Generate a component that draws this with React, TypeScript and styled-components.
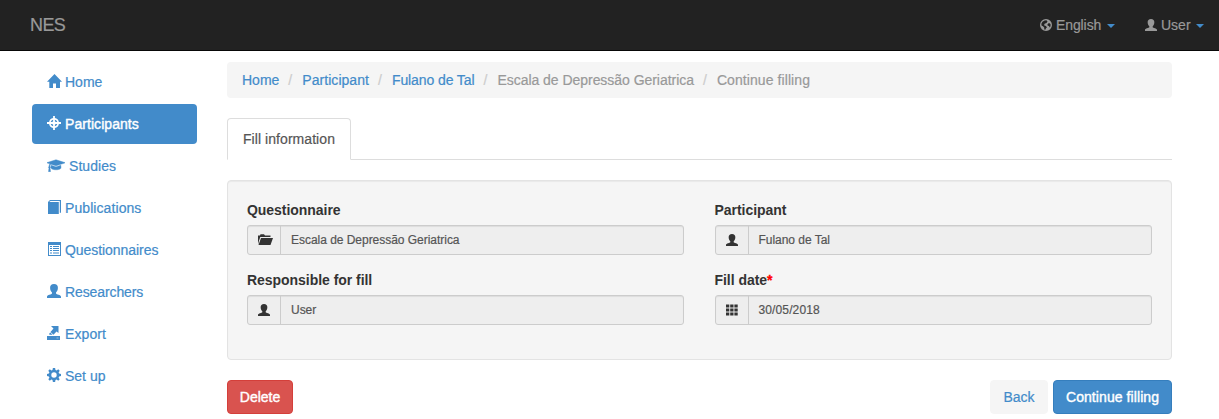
import React from "react";
import styled, { createGlobalStyle, css } from "styled-components";

const GlobalStyle = createGlobalStyle`
  * { box-sizing: border-box; }
  body {
    margin: 0;
    background: #fff;
    color: #333;
    font: 14px/20px "Liberation Sans", Arial, sans-serif;
    -webkit-text-stroke: 0.2px currentColor;
  }
`;

const Navbar = styled.header`
  display: flex;
  align-items: center;
  gap: 30px;
  height: 51px;
  padding: 0 15px 0 30px;
  background: #222;
  border-bottom: 1px solid #080808;
  color: #999;
`;

const Brand = styled.div`
  flex: 1;
  font-size: 18px;
  letter-spacing: -0.6px;
`;

const Text = styled.span<{ $spacing?: number }>`
  letter-spacing: ${(p) => p.$spacing ?? 0}px;
  white-space: nowrap;
`;

const NavMenu = styled.a<{ $width: number }>`
  display: flex;
  align-items: center;
  width: ${(p) => p.$width}px;
`;

const Caret = styled.i`
  margin: 2px 0 0 auto;
  border: 4px solid transparent;
  border-top-color: #428bca;
  border-bottom: 0;
`;

const Glyph = styled.svg<{ $w?: number; $h?: number; $gap?: number }>`
  flex: none;
  width: ${(p) => p.$w ?? 14}px;
  height: ${(p) => p.$h ?? 14}px;
  margin-right: ${(p) => p.$gap ?? 4}px;
  fill: currentColor;
`;

const Page = styled.div`
  display: grid;
  grid-template-columns: 165px 945px;
  gap: 30px;
  padding: 11px 0 0 32px;
`;

const Sidebar = styled.nav`
  display: flex;
  flex-direction: column;
  gap: 2px;
`;

const SideLink = styled.a<{ $active?: boolean }>`
  display: flex;
  align-items: center;
  height: 40px;
  padding: 0 15px;
  border-radius: 4px;
  color: #428bca;
  -webkit-text-stroke: 0.2px currentColor;
  ${(p) => p.$active && css`
    background: #428bca;
    color: #fff;
    -webkit-text-stroke: 0.4px #fff;
  `}
  svg { margin-bottom: 2px; }
`;

const Main = styled.main`
  display: flex;
  flex-direction: column;
`;

const Breadcrumb = styled.ol`
  display: flex;
  height: 36px;
  margin: 0 0 20px;
  padding: 8px 15px;
  list-style: none;
  background: #f5f5f5;
  border-radius: 4px;
  li + li::before {
    content: "/";
    display: inline-block;
    width: 14px;
    padding-left: 9px;
    color: #ccc;
    letter-spacing: 0;
  }
`;

const Crumb = styled.li<{ $link?: boolean; $spacing: number }>`
  color: ${(p) => (p.$link ? "#428bca" : "#999")};
  letter-spacing: ${(p) => p.$spacing}px;
  white-space: nowrap;
`;

const Tabs = styled.div`
  display: flex;
  height: 42px;
  margin-bottom: 20px;
  border-bottom: 1px solid #ddd;
`;

const Tab = styled.div`
  width: 124px;
  height: 42px;
  padding: 10px 15px;
  background: #fff;
  border: 1px solid #ddd;
  border-bottom-color: #fff;
  border-radius: 4px 4px 0 0;
  color: #555;
`;

const Well = styled.section`
  display: grid;
  grid-template-columns: 437px 437.5px;
  grid-auto-rows: 55px;
  gap: 15px 30.5px;
  height: 180px;
  margin-bottom: 20px;
  padding: 19px;
  background: #f5f5f5;
  border: 1px solid #e3e3e3;
  border-radius: 4px;
  box-shadow: inset 0 1px 1px rgba(0, 0, 0, 0.05);
`;

const Label = styled.label`
  display: block;
  margin-bottom: 5px;
  font-weight: bold;
  letter-spacing: -0.04px;
  -webkit-text-stroke: 0;
`;

const Required = styled.span`
  color: #f00;
  -webkit-text-stroke: 0.3px #f00;
`;

const InputGroup = styled.div`
  display: flex;
  height: 30px;
  background: #eee;
  border: 1px solid #ccc;
  border-radius: 3px;
  font-size: 12px;
  box-shadow: inset 0 1px 1px rgba(0, 0, 0, 0.075);
`;

const Addon = styled.div`
  display: flex;
  align-items: center;
  width: 33px;
  padding: 0 0 1px 10px;
  border-right: 1px solid #ccc;
`;

const Value = styled.div<{ $spacing?: number }>`
  padding: 4px 10px;
  color: #555;
  letter-spacing: ${(p) => p.$spacing ?? -0.03}px;
`;

const Actions = styled.div`
  display: flex;
  gap: 5px;
`;

type Tone = "danger" | "plain" | "primary";
const tones = {
  danger: css`background: #d9534f; border-color: #d43f3a; color: #fff; margin-right: auto; -webkit-text-stroke: 0.4px #fff;`,
  plain: css`background: #f5f5f5; border-color: #f5f5f5; color: #428bca; -webkit-text-stroke: 0.2px #428bca;`,
  primary: css`background: #428bca; border-color: #357ebd; color: #fff; -webkit-text-stroke: 0.4px #fff;`,
};

const Button = styled.button<{ $tone: Tone; $width: number }>`
  width: ${(p) => p.$width}px;
  height: 34px;
  padding: 0;
  border: 1px solid;
  border-radius: 4px;
  font: inherit;
  ${(p) => tones[p.$tone]}
`;

type IconProps = { $w?: number; $h?: number; $gap?: number };

const UserIcon = (p: IconProps) => (
  <Glyph viewBox="0 0 14 14" {...p}>
    <path d="M7 0C9.600 0 11 1.500 10.900 3.800C10.900 5.900 10.200 7.300 9 8.400V9.600C9.300 10.600 14 10.800 14 12.700V14H0V12.700C0 10.800 4.700 10.600 5 9.600V8.400C3.800 7.300 3.100 5.900 3.100 3.800C3 1.500 4.400 0 7 0Z" />
  </Glyph>
);
const HomeIcon = () => (
  <Glyph viewBox="0 0 15 14" $w={15} $gap={3}>
    <path d="M7.500 0L15 7.800H13V14H9V9.500H6V14H2.300V7.800H0Z" />
  </Glyph>
);
const TargetIcon = () => (
  <Glyph viewBox="0 0 14 14">
    <path d="M6.100 0H7.900V2.100A5 5 0 0 1 11.900 6.100H14V7.900H11.900A5 5 0 0 1 7.900 11.900V14H6.100V11.900A5 5 0 0 1 2.100 7.900H0V6.100H2.100A5 5 0 0 1 6.100 2.100ZM6.100 3.700A3.500 3.500 0 0 0 3.700 6.100H5.200L6.100 5.200ZM7.900 3.700V5.200L8.800 6.100H10.300A3.500 3.500 0 0 0 7.900 3.700ZM3.700 7.900A3.500 3.500 0 0 0 6.100 10.300V8.800L5.200 7.900ZM8.800 7.900L7.900 8.800V10.300A3.500 3.500 0 0 0 10.300 7.900Z" fillRule="evenodd" />
  </Glyph>
);
const CapIcon = () => (
  <Glyph viewBox="0 -100 2304 1792" $w={18}>
    <path stroke="currentColor" strokeWidth="50" d="M1774 836l18 316q4 69-82 128t-235 93.500-323 34.500-323-34.500-235-93.500-82-128l18-316 574 181q22 7 48 7t48-7zM2304 512q0 23-22 31l-1120 352q-4 1-10 1t-10-1l-652-206q-43 34-71 111.500t-34 178.500q63 36 63 109 0 69-58 107l58 433q2 14-8 25-9 11-24 11h-192q-15 0-24-11-10-11-8-25l58-433q-58-38-58-107 0-73 65-111 11-207 98-330l-333-104q-22-8-22-31t22-31l1120-352q4-1 10-1t10 1l1120 352q22 8 22 31z" />
  </Glyph>
);
const BookIcon = () => (
  <Glyph viewBox="0 0 14 14">
    <path d="M3 0H14V12.800H12.800V1H3.500L2.200 2H11.800V14H1V2Z" />
  </Glyph>
);
const ListIcon = () => (
  <Glyph viewBox="0 0 14 14">
    <path d="M1 0H14V14H1ZM2 3V13H13V3ZM3 4H5V5H3ZM6 4H12V5H6ZM3 6H5V7H3ZM6 6H12V7H6ZM3 8H5V9H3ZM6 8H12V9H6ZM3 10.500H5V11.500H3ZM6 10.500H12V11.500H6Z" fillRule="evenodd" />
  </Glyph>
);
const ExportIcon = () => (
  <Glyph viewBox="0 0 14 14">
    <path d="M4 0H11.500V7L9.500 5.500L6.500 8.700L3.500 6L6.500 2.500ZM2.300 7.500L3.200 6.500L5.600 8.800H2.300ZM0 10H13V14H0Z" />
    <path d="M9.500 12H11.500" stroke="#fff" strokeOpacity=".55" strokeWidth=".8" />
  </Glyph>
);
const GearIcon = () => (
  <Glyph viewBox="0 0 14 14">
    <path d="M5.900 0H8.100L8.500 1.900L9.700 2.400L11.200 1.300L12.700 2.800L11.600 4.400L12.100 5.500L14 5.900V8.100L12.100 8.500L11.600 9.700L12.700 11.200L11.200 12.700L9.700 11.600L8.500 12.100L8.100 14H5.900L5.500 12.100L4.400 11.600L2.800 12.700L1.300 11.200L2.400 9.700L1.900 8.500L0 8.100V5.900L1.900 5.500L2.400 4.400L1.300 2.800L2.800 1.300L4.400 2.400L5.500 1.900ZM7 4.300A2.700 2.700 0 1 0 7 9.700A2.700 2.700 0 1 0 7 4.300Z" fillRule="evenodd" />
  </Glyph>
);
const GlobeIcon = () => (
  <Glyph viewBox="0 0 12 12" $w={12} $h={12}>
    <path d="M6 0A6 6 0 1 1 6 12A6 6 0 1 1 6 0ZM6.400 1.300L4.600 1.500L2.500 2.700L1.400 4.700L1.500 6.500L3 7.300L4.200 8.400L4.300 10.400L5.300 10.700L6 9.300L7 8.200L5.800 6.900L4 6.300L4.600 4.700L6.500 4L7.500 2.600ZM8.500 4.300L7.400 5.500L7.800 6.700L9.200 7L9.300 8.600L10.400 7.400L10.600 5.500L9.700 4.300Z" fillRule="evenodd" />
  </Glyph>
);
const FolderIcon = () => (
  <Glyph viewBox="0 0 15 11" $w={15} $h={11} $gap={0}>
    <path d="M0 10.500V1.500H2L2.500 .3H6L7 1.500H12.500V3H2.300L.6 8ZM3 4H15L12.500 11H.5Z" />
  </Glyph>
);
const GridIcon = () => (
  <Glyph viewBox="0 0 12 12" $w={12} $h={12} $gap={0}>
    <path d="M0 .4H3.300V3.400H0ZM4.200 .4H7.500V3.400H4.200ZM8.400 .4H11.700V3.400H8.400ZM0 4.400H3.300V7.400H0ZM4.200 4.400H7.500V7.400H4.200ZM8.400 4.400H11.700V7.400H8.400ZM0 8.400H3.300V11.500H0ZM4.200 8.400H7.500V11.500H4.200ZM8.400 8.400H11.700V11.500H8.400Z" />
  </Glyph>
);

const links: { icon: React.ReactNode; label: string; active?: boolean; spacing?: number }[] = [
  { icon: <HomeIcon />, label: "Home" },
  { icon: <TargetIcon />, label: "Participants", active: true, spacing: 0.06 },
  { icon: <CapIcon />, label: "Studies", spacing: 0.05 },
  { icon: <BookIcon />, label: "Publications", spacing: 0.08 },
  { icon: <ListIcon />, label: "Questionnaires", spacing: -0.06 },
  { icon: <UserIcon />, label: "Researchers", spacing: -0.1 },
  { icon: <ExportIcon />, label: "Export", spacing: 0.1 },
  { icon: <GearIcon />, label: "Set up" },
];

const crumbs = [
  { label: "Home", link: true, spacing: 0 },
  { label: "Participant", link: true, spacing: 0.04 },
  { label: "Fulano de Tal", link: true, spacing: -0.1 },
  { label: "Escala de Depressão Geriatrica", spacing: -0.04 },
  { label: "Continue filling", spacing: 0.08 },
];

const smallUser = <UserIcon $w={12} $h={12} $gap={0} />;
const fields = [
  { label: "Questionnaire", value: "Escala de Depressão Geriatrica", icon: <FolderIcon /> },
  { label: "Participant", value: "Fulano de Tal", icon: smallUser },
  { label: "Responsible for fill", value: "User", icon: smallUser },
  { label: "Fill date", value: "30/05/2018", icon: <GridIcon />, required: true, spacing: 0.12 },
];

export default function App() {
  return (
    <>
      <GlobalStyle />
      <Navbar>
        <Brand>NES</Brand>
        <NavMenu $width={75}>
          <GlobeIcon />
          <Text $spacing={-0.1}>English</Text>
          <Caret />
        </NavMenu>
        <NavMenu $width={59}>
          <UserIcon $w={12} $h={12} />
          <Text>User</Text>
          <Caret />
        </NavMenu>
      </Navbar>
      <Page>
        <Sidebar>
          {links.map((l) => (
            <SideLink key={l.label} $active={l.active}>
              {l.icon}
              <Text $spacing={l.spacing}>{l.label}</Text>
            </SideLink>
          ))}
        </Sidebar>
        <Main>
          <Breadcrumb>
            {crumbs.map((c) => (
              <Crumb key={c.label} $link={c.link} $spacing={c.spacing}>{c.label}</Crumb>
            ))}
          </Breadcrumb>
          <Tabs>
            <Tab><Text $spacing={0.06}>Fill information</Text></Tab>
          </Tabs>
          <Well>
            {fields.map((f) => (
              <div key={f.label}>
                <Label>{f.label}{f.required && <Required>*</Required>}</Label>
                <InputGroup>
                  <Addon>{f.icon}</Addon>
                  <Value $spacing={f.spacing}>{f.value}</Value>
                </InputGroup>
              </div>
            ))}
          </Well>
          <Actions>
            <Button $tone="danger" $width={66}><Text>Delete</Text></Button>
            <Button $tone="plain" $width={58}><Text>Back</Text></Button>
            <Button $tone="primary" $width={119}><Text $spacing={0.08}>Continue filling</Text></Button>
          </Actions>
        </Main>
      </Page>
    </>
  );
}
